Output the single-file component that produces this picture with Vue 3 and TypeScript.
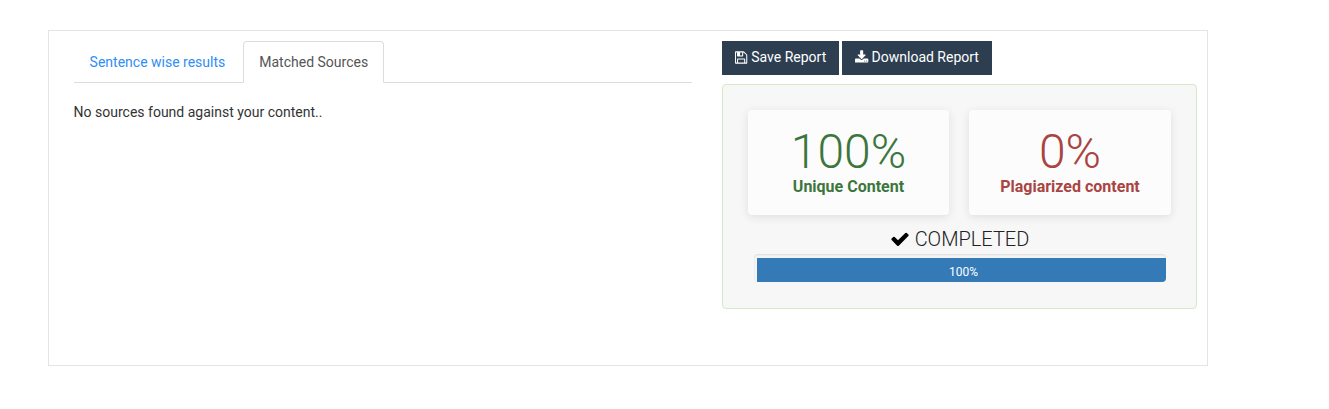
<template>
  <div class="report">
    <div class="left-col">
      <ul class="tabs">
        <li v-for="tab in tabs" :key="tab" :class="['tab', { active: tab === activeTab }]">{{ tab }}</li>
      </ul>
      <p class="no-sources">No sources found against your content..</p>
    </div>

    <div class="right-col">
      <div class="actions">
        <button class="btn">
          <svg class="btn-icon" viewBox="0 0 1664 1792" fill="currentColor">
            <path d="M384 1536h768v-384h-768v384zm896 0h128v-896q0-14-10-38.500t-20-34.500l-281-281q-10-10-34-20t-39-10v416q0 40-28 68t-68 28h-576q-40 0-68-28t-28-68v-416h-128v1280h128v-416q0-40 28-68t68-28h832q40 0 68 28t28 68v416zm-384-928v-320q0-13-9.500-22.500t-22.500-9.500h-192q-13 0-22.500 9.500t-9.500 22.500v320q0 13 9.500 22.500t22.500 9.500h192q13 0 22.500-9.500t9.500-22.500zm640 32v928q0 40-28 68t-68 28h-1344q-40 0-68-28t-28-68v-1344q0-40 28-68t68-28h928q40 0 88 20t76 48l280 280q28 28 48 76t20 88z" />
          </svg>
          <span>Save Report</span>
        </button>
        <button class="btn">
          <svg class="btn-icon" viewBox="0 0 1664 1792" fill="currentColor">
            <path d="M1280 1344q0-26-19-45t-45-19-45 19-19 45 19 45 45 19 45-19 19-45zm256 0q0-26-19-45t-45-19-45 19-19 45 19 45 45 19 45-19 19-45zm128-224v320q0 40-28 68t-68 28h-1472q-40 0-68-28t-28-68v-320q0-40 28-68t68-28h465l135 136q58 56 136 56t136-56l136-136h464q40 0 68 28t28 68zm-325-569q17 41-14 70l-448 448q-18 19-45 19t-45-19l-448-448q-31-29-14-70 17-39 59-39h256v-448q0-26 19-45t45-19h256q26 0 45 19t19 45v448h256q42 0 59 39z" />
          </svg>
          <span>Download Report</span>
        </button>
      </div>

      <div class="result-panel">
        <div class="cards">
          <div v-for="card in cards" :key="card.label" :class="['card', card.kind]">
            <div class="percent">{{ card.percent }}%</div>
            <div class="label">{{ card.label }}</div>
          </div>
        </div>
        <div class="status">
          <svg class="check" viewBox="0 0 1792 1792" fill="currentColor">
            <path d="M1671 566q0 40-28 68l-724 724-136 136q-28 28-68 28t-68-28l-136-136-362-362q-28-28-28-68t28-68l136-136q28-28 68-28t68 28l294 295 656-657q28-28 68-28t68 28l136 136q28 28 28 68z" />
          </svg>
          COMPLETED
        </div>
        <div class="progress">
          <div class="progress-bar" :style="{ width: progress + '%' }">{{ progress }}%</div>
        </div>
      </div>
    </div>
  </div>
</template>

<script setup lang="ts">
const tabs: string[] = ['Sentence wise results', 'Matched Sources'];
const activeTab = 'Matched Sources';
const progress = 100;

const cards = [
  { percent: 100, label: 'Unique Content', kind: 'unique' },
  { percent: 0, label: 'Plagiarized content', kind: 'plagiarized' },
];
</script>

<style>
body {
  background: #fff;
}
</style>

<style scoped>
.report {
  display: flex;
  box-sizing: border-box;
  width: 1160px;
  height: 336px;
  margin: 30px 0 0 48px;
  padding: 10px 10px 0 24.6px;
  border: 1px solid #e4e4e4;
  font-family: Roboto, "Liberation Sans", sans-serif;
  font-size: 14px;
  color: #333;
}

.left-col {
  width: 618.4px;
  margin-right: 30px;
}

.tabs {
  display: flex;
  box-sizing: border-box;
  height: 42px;
  margin: 0;
  padding: 0;
  list-style: none;
  border-bottom: 1px solid #ddd;
}

.tab {
  box-sizing: border-box;
  height: 42px;
  padding: 10px 15px;
  border: 1px solid transparent;
  border-radius: 4px 4px 0 0;
  line-height: 20px;
  margin-right: 2px;
  color: #2f8ef5;
}

.tab.active {
  color: #555;
  background: #fff;
  border-color: #ddd #ddd #fff;
}

.no-sources {
  margin: 19px 0 0;
  line-height: 20px;
}

.right-col {
  width: 475px;
}

.actions {
  display: flex;
  gap: 3px;
  margin-bottom: 9px;
}

.btn {
  display: flex;
  align-items: center;
  gap: 3px;
  height: 34px;
  padding: 0 13px;
  border: 0;
  background: #2c3e50;
  color: #fff;
  font: inherit;
  white-space: nowrap;
}

.btn span {
  margin-top: -2px;
}

.btn-icon {
  width: 13.3px;
  height: 15px;
  margin-top: -2px;
}

.result-panel {
  box-sizing: border-box;
  height: 225px;
  padding: 25px 25px 0;
  background: #f7f7f7;
  border: 1px solid #d6e9c6;
  border-radius: 4px;
}

.cards {
  display: flex;
  gap: 20px;
}

.card {
  box-sizing: border-box;
  width: 201px;
  height: 105px;
  padding-top: 14px;
  background: #fcfcfc;
  border-radius: 4px;
  box-shadow: 0 2px 10px rgba(0, 0, 0, 0.1);
  text-align: center;
}

.card:last-child {
  width: 202px;
}

.percent {
  font-size: 48px;
  font-weight: 300;
  line-height: 55px;
}

.label {
  font-size: 16px;
  font-weight: 700;
  line-height: 16px;
}

.unique {
  color: #3c763d;
}

.plagiarized {
  color: #a94442;
}

.status {
  display: flex;
  align-items: center;
  justify-content: center;
  gap: 5px;
  height: 24px;
  margin-top: 12px;
  font-size: 20px;
  font-weight: 300;
  color: #222;
}

.check {
  width: 20px;
  height: 20px;
  color: #000;
}

.progress {
  box-sizing: border-box;
  width: 412px;
  height: 28px;
  margin: 3px 0 0 6px;
  padding: 4px 0 0 3px;
  background: #f5f5f5;
  border-radius: 4px;
  box-shadow: inset 0 1px 2px rgba(0, 0, 0, 0.1);
}

.progress-bar {
  box-sizing: border-box;
  height: 24px;
  padding-left: 4px;
  background: #337ab7;
  border-radius: 0 0 4px 0;
  color: #fff;
  font-size: 12px;
  line-height: 28px;
  text-align: center;
}
</style>
